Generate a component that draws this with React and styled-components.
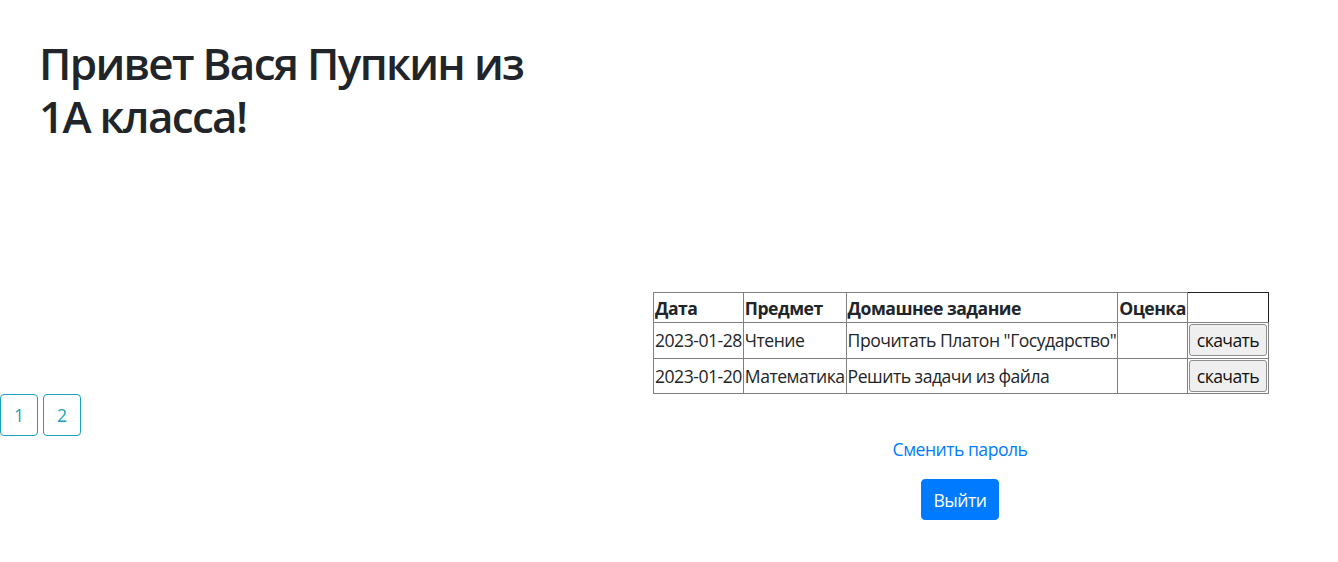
import React from "react";
import styled, { createGlobalStyle } from "styled-components";

const Global = createGlobalStyle`
  html, body { margin: 0; padding: 0; background: #fff; }
  body {
    font-family: "Open Sans", "Noto Sans", sans-serif;
    font-size: 17.6px;
    line-height: 1.5;
    color: #212529;
  }
`;

const Page = styled.div`
  display: flex;
  flex-direction: column;
  width: 1338px;
`;

const Header = styled.header`
  height: 292px;
  padding: 37px 0 0 39px;
  box-sizing: border-box;
`;

const Title = styled.h1`
  margin: 0;
  width: 500px;
  font-size: 44px;
  font-weight: 600;
  line-height: 52.8px;
  letter-spacing: -1.7px;
  color: #212529;
`;

const TableRow = styled.div`
  display: flex;
  padding-left: 653px;
`;

const Table = styled.table`
  border-collapse: collapse;
  border: 1px solid #808080;
  font-size: 17.6px;
  line-height: 26px;
  letter-spacing: -0.5px;
`;

const Th = styled.th`
  border: 1px solid #808080;
  padding: 1px 1px;
  height: 30px;
  box-sizing: border-box;
  text-align: left;
  font-weight: 700;
  white-space: nowrap;
  ${(p) => p.$dark && "border-top-color: #222; border-right-color: #222; width: 79px;"}
`;

const Td = styled.td`
  border: 1px solid #808080;
  padding: 1px 1px;
  height: 35.5px;
  box-sizing: border-box;
  white-space: nowrap;
`;

const DownloadButton = styled.button`
  display: block;
  font-family: inherit;
  font-size: 17.6px;
  letter-spacing: -0.6px;
  color: #111;
  background: #efefef;
  border: 1px solid #8f8f8f;
  border-radius: 3px;
  padding: 0 7px;
  width: 78px;
  height: 32px;
  cursor: pointer;
`;

const Pagination = styled.nav`
  display: flex;
  gap: 5px;
`;

const PageButton = styled.button`
  width: 38px;
  height: 42px;
  box-sizing: border-box;
  border: 1px solid #17a2b8;
  border-radius: 4px;
  background: #fff;
  color: #17a2b8;
  font-family: inherit;
  font-size: 17.6px;
  padding: 0;
`;

const Actions = styled.div`
  width: 614px;
  margin-left: 653px;
  margin-top: 0;
  display: flex;
  flex-direction: column;
  align-items: center;
  gap: 17px;
`;

const Link = styled.a`
  color: #007bff;
  text-decoration: none;
  font-size: 17.6px;
  line-height: 26px;
  letter-spacing: -0.5px;
`;

const PrimaryButton = styled.button`
  background: #007bff;
  color: #fff;
  border: 1px solid #007bff;
  border-radius: 4px;
  font-family: inherit;
  font-size: 17.6px;
  letter-spacing: -0.5px;
  width: 78px;
  padding: 0;
  height: 41px;
`;

const rows = [
  { date: "2023-01-28", subject: "Чтение", task: 'Прочитать Платон "Государство"' },
  { date: "2023-01-20", subject: "Математика", task: "Решить задачи из файла" },
];

export default function App() {
  return (
    <>
      <Global />
      <Page>
        <Header>
          <Title>Привет Вася Пупкин из 1А класса!</Title>
        </Header>
        <TableRow>
          <Table>
            <thead>
              <tr>
                <Th>Дата</Th>
                <Th>Предмет</Th>
                <Th>Домашнее задание</Th>
                <Th>Оценка</Th>
                <Th $dark></Th>
              </tr>
            </thead>
            <tbody>
              {rows.map((r) => (
                <tr key={r.date}>
                  <Td>{r.date}</Td>
                  <Td>{r.subject}</Td>
                  <Td>{r.task}</Td>
                  <Td></Td>
                  <Td>
                    <DownloadButton>скачать</DownloadButton>
                  </Td>
                </tr>
              ))}
            </tbody>
          </Table>
        </TableRow>
        <Pagination>
          <PageButton>1</PageButton>
          <PageButton>2</PageButton>
        </Pagination>
        <Actions>
          <Link href="#">Сменить пароль</Link>
          <PrimaryButton>Выйти</PrimaryButton>
        </Actions>
      </Page>
    </>
  );
}
